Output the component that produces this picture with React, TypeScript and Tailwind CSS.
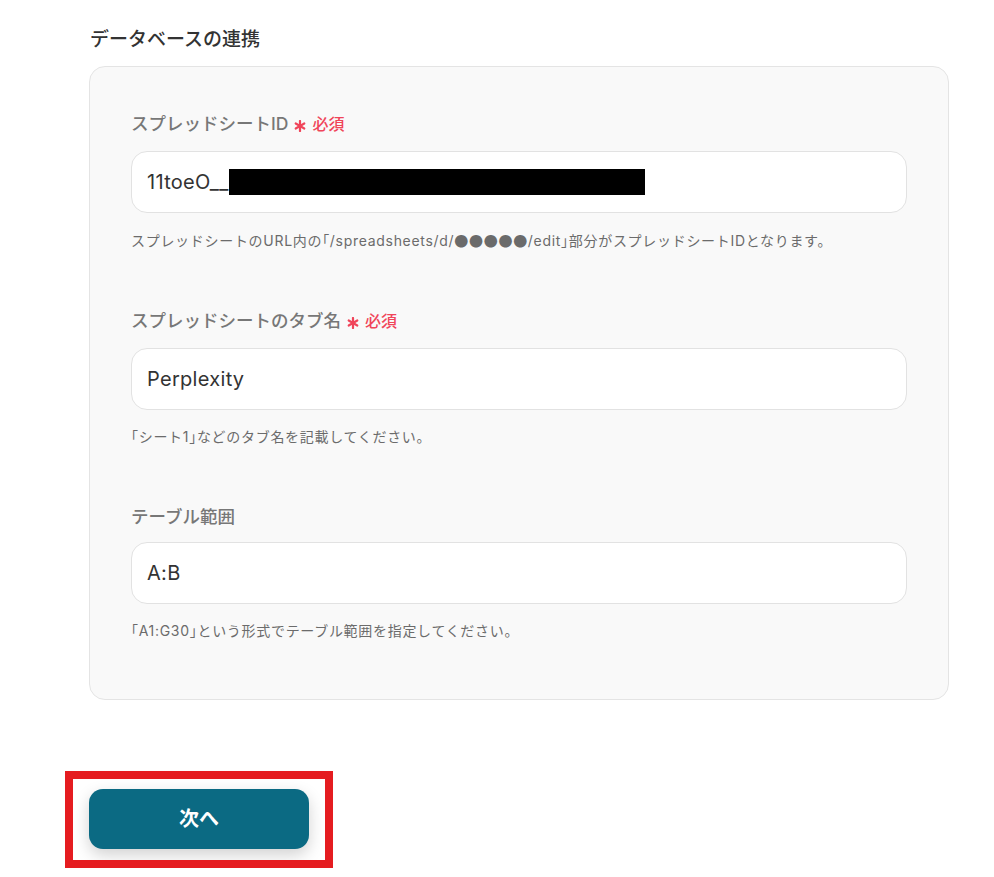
const font = {
  fontFamily: 'Inter, "Noto Sans CJK JP", sans-serif',
};

function Asterisk() {
  return (
    <svg width="12" height="12" viewBox="0 0 12 12" className="translate-y-[2px]" aria-hidden>
      <g stroke="#f0455a" strokeWidth="2.2" strokeLinecap="round">
        <line x1="6" y1="1" x2="6" y2="11" />
        <line x1="1.7" y1="3.5" x2="10.3" y2="8.5" />
        <line x1="1.7" y1="8.5" x2="10.3" y2="3.5" />
      </g>
    </svg>
  );
}

function Required() {
  return (
    <span className="ml-[6px] inline-flex items-center gap-[6px] text-[16px] font-medium text-[#f0455a]">
      <Asterisk />
      <span>必須</span>
    </span>
  );
}

// half-width brackets, as in the original page
function Br({ c }: { c: string }) {
  return <span className="[font-feature-settings:'halt']">{c}</span>;
}

function Field({
  label,
  required,
  value,
  help,
  masked,
}: {
  label: string;
  required?: boolean;
  value: string;
  help: React.ReactNode;
  masked?: boolean;
}) {
  return (
    <div className="flex flex-col">
      <div className="flex items-center h-6 text-[17.5px] font-medium text-[#777777]">
        <span>{label}</span>
        {required && <Required />}
      </div>
      <div
        className={`${required ? "mt-[15px]" : "mt-[13px]"} h-[62px] rounded-2xl border border-[#e2e2e2] bg-white flex items-center px-[15px] text-[20px] tracking-[0.015em] text-[#333333]`}
      >
        <span>{value}</span>
        {masked && <span className="h-[26px] w-[416px] bg-black" />}
      </div>
      <p className="mt-[17px] text-[14px] leading-5 tracking-[0.05em] text-[#6b6b6b]">{help}</p>
    </div>
  );
}

export default function App() {
  return (
    <div className="min-h-screen bg-white pl-[89px] pr-[45px] pt-[26px]" style={font}>
      <h2 className="text-[19px] leading-7 font-medium text-[#333333] pl-[1px]">データベースの連携</h2>

      <div className="mt-3 rounded-2xl border border-[#e4e4e4] bg-[#f9f9f9] px-[41px] pt-[45px] pb-[58px] flex flex-col gap-[58px]">
        <Field
          label="スプレッドシートID"
          required
          value="11toeO__"
          masked
          help={
            <>
              スプレッドシートのURL内の<Br c="「" />/spreadsheets/d/
              <span style={{ fontFamily: '"Noto Sans CJK JP", sans-serif' }}>●●●●●</span>
              /edit<Br c="」" />部分がスプレッドシートIDとなります。
            </>
          }
        />
        <Field
          label="スプレッドシートのタブ名"
          required
          value="Perplexity"
          help={
            <>
              <Br c="「" />シート1<Br c="」" />などのタブ名を記載してください。
            </>
          }
        />
        <Field
          label="テーブル範囲"
          value="A:B"
          help={
            <>
              <Br c="「" />A1:G30<Br c="」" />という形式でテーブル範囲を指定してください。
            </>
          }
        />
      </div>

      <div className="mt-[89px] relative w-[220px]">
        <button className="h-[60px] w-[220px] rounded-[14px] bg-[#0b6a83] text-white text-[20px] font-bold shadow-[0_6px_16px_rgba(0,0,0,0.18)]">
          次へ
        </button>
        <span className="pointer-events-none absolute left-[-24px] right-[-24px] top-[-18px] bottom-[-19px] border-[8px] border-[#e51c20]" />
      </div>
    </div>
  );
}
